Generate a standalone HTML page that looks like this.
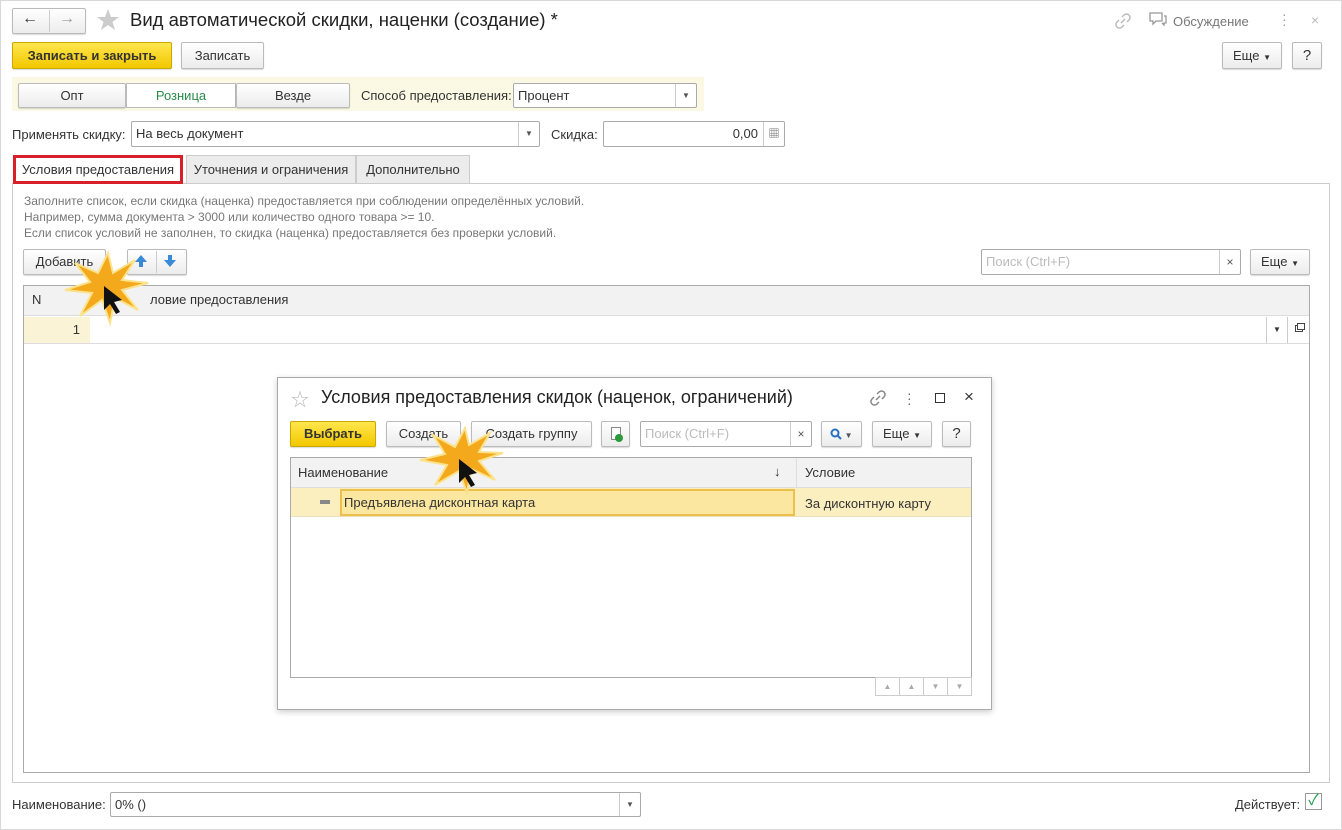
<!DOCTYPE html>
<html><head><meta charset="utf-8"><style>
*{box-sizing:border-box}
body{margin:0;width:1342px;height:830px;background:#fff;font-family:"Liberation Sans","Noto Sans CJK SC",sans-serif;font-size:13px;color:#333;position:relative;overflow:hidden}
.a{position:absolute}
.btn{position:absolute;border:1px solid #bbb;border-radius:2px;background:linear-gradient(#fff,#ececec);box-shadow:0 1px 1px rgba(0,0,0,.15);text-align:center;color:#333;font-size:13px}
.y{background:linear-gradient(#ffe64d,#f3c800);border-color:#c9a800;font-weight:bold;color:#333}
.fld{position:absolute;border:1px solid #aaa;border-radius:2px;background:#fff;font-size:13px;padding-left:4px}
.dd{position:absolute;top:0;bottom:0;right:0;width:21px;border-left:1px solid #ccc;text-align:center;font-size:8px;color:#555}
.gray{color:#777}
</style></head><body>
<div class="a" style="left:0;top:0;width:1342px;height:830px;border:1px solid #d8d8d8"></div>
<!-- nav -->
<div class="btn" style="left:12px;top:8px;width:74px;height:26px"></div>
<div class="a" style="left:49px;top:10px;width:1px;height:22px;background:#ccc"></div>
<div class="a" style="left:22px;top:10px;font-size:16px;color:#333">&#8592;</div>
<div class="a" style="left:59px;top:10px;font-size:16px;color:#999">&#8594;</div>
<svg class="a" style="left:96px;top:8px" width="24" height="24" viewBox="0 0 24 24"><polygon points="12,1 15,9 23,9 16.5,14 19,22 12,17 5,22 7.5,14 1,9 9,9" fill="#ccc"/></svg>
<div class="a" style="left:130px;top:9px;font-size:18.5px;color:#222">Вид автоматической скидки, наценки (создание) *</div>
<svg class="a" style="left:1114px;top:12px" width="18" height="18" viewBox="0 0 18 18" fill="none" stroke="#bbb" stroke-width="1.5"><path d="M7 11 L11 7 M8 5 L10 3 A3 3 0 0 1 15 8 L13 10 M10 13 L8 15 A3 3 0 0 1 3 10 L5 8"/></svg>
<svg class="a" style="left:1149px;top:12px" width="18" height="16" viewBox="0 0 18 16" fill="none" stroke="#999" stroke-width="1.3"><path d="M1 1 H13 V9 H7 L4 12 V9 H1 Z M15 4 H17 V11 H15 V13 L13 11"/></svg>
<div class="a gray" style="left:1173px;top:14px">Обсуждение</div>
<div class="a" style="left:1282px;top:12px;color:#999;font-size:14px;line-height:5px">·<br>·<br>·</div>
<div class="a" style="left:1311px;top:12px;color:#bbb;font-size:14px">×</div>
<!-- buttons -->
<div class="btn y" style="left:12px;top:42px;width:160px;height:27px;line-height:25px">Записать и закрыть</div>
<div class="btn" style="left:181px;top:42px;width:83px;height:27px;line-height:25px">Записать</div>
<div class="btn" style="left:1222px;top:42px;width:60px;height:27px;line-height:25px">Еще <span style="font-size:8px">▼</span></div>
<div class="btn" style="left:1292px;top:42px;width:30px;height:27px;line-height:25px;font-size:15px">?</div>
<!-- band -->
<div class="a" style="left:12px;top:77px;width:692px;height:34px;background:#fbf9e4"></div>
<div class="btn" style="left:18px;top:83px;width:108px;height:25px;line-height:23px">Опт</div>
<div class="a" style="left:126px;top:83px;width:110px;height:25px;line-height:23px;border:1px solid #bbb;background:#fff;text-align:center;color:#2a8a4a">Розница</div>
<div class="btn" style="left:236px;top:83px;width:114px;height:25px;line-height:23px">Везде</div>
<div class="a" style="left:361px;top:88px">Способ предоставления:</div>
<div class="fld" style="left:513px;top:83px;width:184px;height:25px;line-height:23px">Процент<div class="dd" style="line-height:23px">▼</div></div>
<!-- row -->
<div class="a" style="left:12px;top:127px">Применять скидку:</div>
<div class="fld" style="left:131px;top:121px;width:409px;height:26px;line-height:24px">На весь документ<div class="dd" style="line-height:24px">▼</div></div>
<div class="a" style="left:551px;top:127px">Скидка:</div>
<div class="fld" style="left:603px;top:121px;width:182px;height:26px;line-height:24px;text-align:right;padding-right:26px">0,00<div class="dd" style="line-height:24px;font-size:11px">&#9638;</div></div>
<!-- tabs -->
<div class="a" style="left:12px;top:183px;width:1318px;height:600px;border:1px solid #ccc"></div>
<div class="a" style="left:186px;top:155px;width:170px;height:29px;border:1px solid #ccc;background:#ececec;text-align:center;line-height:27px">Уточнения и ограничения</div>
<div class="a" style="left:356px;top:155px;width:114px;height:29px;border:1px solid #ccc;background:#ececec;text-align:center;line-height:27px">Дополнительно</div>
<div class="a" style="left:13px;top:155px;width:170px;height:29px;border:3px solid #d8202a;background:#fff;text-align:center;line-height:23px">Условия предоставления</div>
<div class="a gray" style="left:24px;top:193px;font-size:12px;line-height:16px">Заполните список, если скидка (наценка) предоставляется при соблюдении определённых условий.<br>Например, сумма документа &gt; 3000 или количество одного товара &gt;= 10.<br>Если список условий не заполнен, то скидка (наценка) предоставляется без проверки условий.</div>
<div class="btn" style="left:23px;top:249px;width:83px;height:26px;line-height:24px">Добавить</div>
<div class="btn" style="left:127px;top:249px;width:60px;height:26px"></div>
<div class="a" style="left:156px;top:251px;width:1px;height:22px;background:#ccc"></div>
<svg class="a" style="left:134px;top:254px" width="14" height="14" viewBox="0 0 14 14"><path d="M7 1 L13 8 H9 V13 H5 V8 H1 Z" fill="#3a8ad8"/></svg>
<svg class="a" style="left:163px;top:254px" width="14" height="14" viewBox="0 0 14 14"><path d="M7 13 L13 6 H9 V1 H5 V6 H1 Z" fill="#3a8ad8"/></svg>
<div class="fld" style="left:981px;top:249px;width:260px;height:26px;line-height:24px;color:#bbb">Поиск (Ctrl+F)<div class="dd" style="line-height:24px;font-size:12px;color:#555">×</div></div>
<div class="btn" style="left:1250px;top:249px;width:60px;height:26px;line-height:24px">Еще <span style="font-size:8px">▼</span></div>
<div class="a" style="left:23px;top:285px;width:1287px;height:488px;border:1px solid #aaa"></div>
<div class="a" style="left:24px;top:286px;width:1285px;height:30px;background:#f2f2f2;border-bottom:1px solid #ddd"></div>
<div class="a" style="left:32px;top:292px">N</div>
<div class="a" style="left:150px;top:292px">ловие предоставления</div>
<div class="a" style="left:24px;top:317px;width:66px;height:26px;background:#fbf3d6;text-align:right;padding-right:10px;line-height:26px">1</div>
<div class="a" style="left:24px;top:343px;width:1285px;height:1px;background:#ddd"></div>
<div class="a" style="left:1266px;top:317px;width:22px;height:26px;border-left:1px solid #ccc;border-right:1px solid #ccc;font-size:8px;text-align:center;line-height:26px">▼</div>
<div class="a" style="left:1295px;top:325px;width:8px;height:7px;border:1px solid #444"></div>
<div class="a" style="left:1297px;top:323px;width:8px;height:7px;border:1px solid #444;background:#fff"></div>
<!-- dialog -->
<div class="a" style="left:277px;top:377px;width:715px;height:333px;border:1px solid #aaa;background:#fff;box-shadow:0 2px 6px rgba(0,0,0,.2)"></div>
<div class="a" style="left:291px;top:386px;font-size:18px;color:#bbb">&#9734;</div>
<div class="a" style="left:321px;top:387px;font-size:18px;color:#222">Условия предоставления скидок (наценок, ограничений)</div>
<svg class="a" style="left:869px;top:389px" width="18" height="18" viewBox="0 0 18 18" fill="none" stroke="#888" stroke-width="1.5"><path d="M7 11 L11 7 M8 5 L10 3 A3 3 0 0 1 15 8 L13 10 M10 13 L8 15 A3 3 0 0 1 3 10 L5 8"/></svg>
<div class="a" style="left:907px;top:391px;color:#666;font-size:14px;line-height:5px">·<br>·<br>·</div>
<div class="a" style="left:935px;top:393px;width:10px;height:10px;border:1.5px solid #333"></div>
<div class="a" style="left:964px;top:387px;font-size:17px;color:#333">×</div>
<div class="btn y" style="left:290px;top:421px;width:86px;height:26px;line-height:24px">Выбрать</div>
<div class="btn" style="left:386px;top:421px;width:75px;height:26px;line-height:24px">Создать</div>
<div class="btn" style="left:471px;top:421px;width:121px;height:26px;line-height:24px">Создать группу</div>
<div class="btn" style="left:601px;top:421px;width:29px;height:26px"><div class="a" style="left:9px;top:5px;width:10px;height:13px;border:1px solid #888;background:#fff"></div><div class="a" style="left:13px;top:12px;width:8px;height:8px;border-radius:50%;background:#2a9a3a"></div></div>
<div class="fld" style="left:640px;top:421px;width:172px;height:26px;line-height:24px;color:#bbb">Поиск (Ctrl+F)<div class="dd" style="line-height:24px;font-size:12px;color:#555">×</div></div>
<div class="btn" style="left:821px;top:421px;width:41px;height:26px;line-height:24px"><svg style="vertical-align:-2px" width="12" height="12" viewBox="0 0 12 12" fill="none" stroke="#2a70c0" stroke-width="2"><circle cx="5" cy="5" r="3.5"/><path d="M7.5 7.5 L11 11"/></svg><span style="font-size:8px;color:#555"> ▼</span></div>
<div class="btn" style="left:872px;top:421px;width:60px;height:26px;line-height:24px">Еще <span style="font-size:8px">▼</span></div>
<div class="btn" style="left:942px;top:421px;width:29px;height:26px;line-height:24px;font-size:15px">?</div>
<div class="a" style="left:290px;top:457px;width:682px;height:221px;border:1px solid #aaa"></div>
<div class="a" style="left:291px;top:458px;width:680px;height:30px;background:#f2f2f2;border-bottom:1px solid #ddd"></div>
<div class="a" style="left:796px;top:458px;width:1px;height:59px;background:#ddd"></div>
<div class="a" style="left:298px;top:465px">Наименование</div>
<div class="a" style="left:774px;top:464px">↓</div>
<div class="a" style="left:805px;top:465px">Условие</div>
<div class="a" style="left:291px;top:488px;width:680px;height:29px;background:#fbefc0;border-bottom:1px solid #e8e0c0"></div>
<div class="a" style="left:320px;top:500px;width:10px;height:4px;background:#888"></div>
<div class="a" style="left:340px;top:489px;width:455px;height:27px;border:2px solid #ecc04a;background:#fbe7a0;line-height:23px;padding-left:2px">Предъявлена дисконтная карта</div>
<div class="a" style="left:805px;top:496px">За дисконтную карту</div>
<div class="a" style="left:875px;top:677px;width:97px;height:19px;border:1px solid #ccc;font-size:8px;color:#aaa;display:flex">
<div style="flex:1;border-right:1px solid #ccc;text-align:center;line-height:17px">▲</div><div style="flex:1;border-right:1px solid #ccc;text-align:center;line-height:17px">▲</div><div style="flex:1;border-right:1px solid #ccc;text-align:center;line-height:17px">▼</div><div style="flex:1;text-align:center;line-height:17px">▼</div></div>
<!-- bottom -->
<div class="a" style="left:12px;top:797px">Наименование:</div>
<div class="fld" style="left:110px;top:792px;width:531px;height:25px;line-height:23px">0% ()<div class="dd" style="line-height:23px">▼</div></div>
<div class="a" style="left:1235px;top:797px">Действует:</div>
<div class="a" style="left:1305px;top:793px;width:17px;height:17px;border:1px solid #999;color:#1a9a4a;font-size:15px;line-height:14px;text-align:center">✓</div>
<!-- starbursts -->
<svg class="a" style="left:60px;top:248px" width="90" height="80" viewBox="0 0 90 80"><polygon points="48,5 53,25 75,12 62,32 88,35 62,42 78,62 55,50 50,75 42,52 20,68 32,45 5,42 30,34 15,15 38,25" fill="#f4a81c" stroke="#fce28a" stroke-width="2"/><polygon points="44,38 44,62 50,56 56,66 60,64 54,54 62,52" fill="#111"/></svg>
<svg class="a" style="left:415px;top:425px" width="90" height="70" viewBox="0 0 90 70"><polygon points="50,3 54,20 75,8 64,27 88,28 64,36 80,55 56,44 52,68 44,46 20,60 32,40 5,35 30,29 18,10 40,22" fill="#f4a81c" stroke="#fce28a" stroke-width="2"/><polygon points="44,34 44,58 50,52 56,62 60,60 54,50 62,48" fill="#111"/></svg>
</body></html>
